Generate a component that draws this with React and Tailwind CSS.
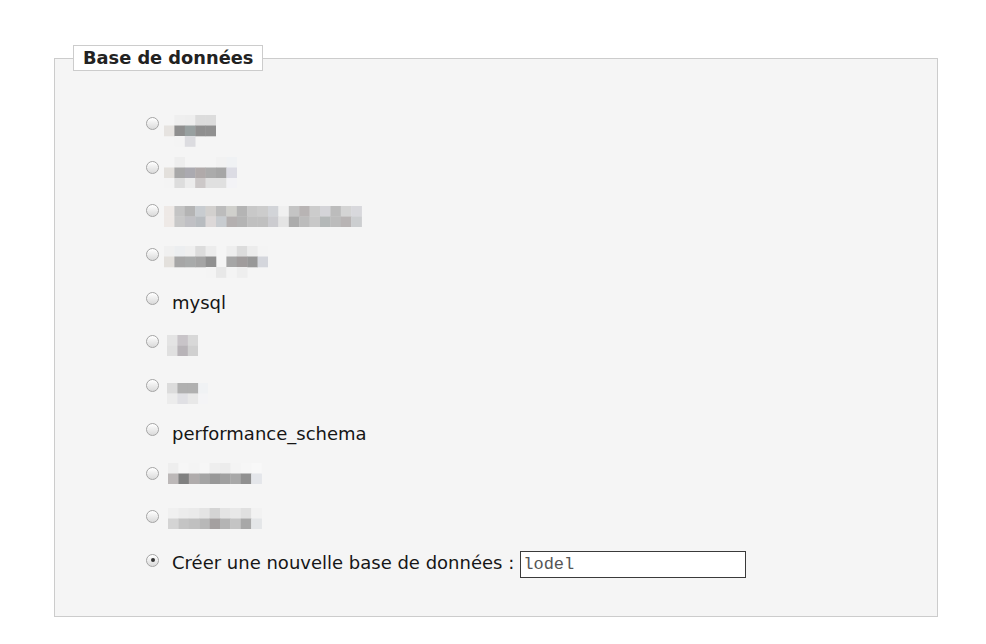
import React from "react";

const CELL_W = 10.4;
const CELL_H = 10.5;

// pixelated (blurred) database names
const blurred = {
  a: [
    ["f5f5f5", "efefef", "eeeeee", "dcdcdc", "dcdcdc"],
    ["e6e3e0", "8f8f8f", "98a0a0", "8f8f8f", "909090"],
    [null, "f4f4f4", "dcdce0", null, null],
  ],
  b: [
    [null, "eeeeee", null, null, null, "f2f2f2", "f0f2f4"],
    ["e3e0dc", "a8a8a8", "abaab0", "b0aaaa", "ababab", "a6a6a6", "dcdce4"],
    ["f4f4f4", "dddddd", "ececec", "ccc8c8", "e0e0e0", "e0e0e0", "f3f3f6"],
  ],
  c: [
    ["eee9e6", "c4c4c4", "b4b4b4", "c8ccd0", "d2d0ce", "bcbcbc", "d0d0cc", "b4b4b4", "c8c8c8", "cccccc", "d2d4d8", "f0f0f0", "c4c4c4", "b8b4b4", "cccccc", "d4d4d8", "bcbcbc", "d4d4d4", "d8d8dc"],
    ["eee9e6", "c8c8c8", "c0c0c4", "b8bcc0", "dcd8d8", "c8ccd0", "b4b0b0", "b4b4b4", "c0c0c0", "c0c0c0", "ccccd0", "e4e4e4", "acacac", "bcbcbc", "c8c8c8", "b4b8b8", "bcbcbc", "b8b4b4", "ccced0"],
  ],
  d: [
    ["f0f0f0", "eceef0", "efefef", "dcdcdc", "ececec", null, "eeeeee", "dcdcdc", "ececec", "f4f4f4"],
    ["e3e0dc", "a6a6a6", "a8aaaa", "a4a4a4", "909090", null, "a6a6a6", "a09c9c", "989898", "d4d6dc"],
    [null, null, null, null, "f4f4f4", "e8e8e8", "f4f4f4", "eeeeee", null, null],
  ],
  e: [
    ["e4e4e4", "c8c4c8", "d8d8d8"],
    ["e0e0e0", "b8b4b8", "d0d0d0"],
  ],
  f: [
    ["dcdcdc", "b0b0b0", "b0b0b0", "f0f2f4"],
    ["ececec", "e0e0e4", "e8e8e8", "f4f4f6"],
  ],
  g: [
    ["eeeeee", "f6f6f6", "f4f4f4", "f6f6f6", "eeeeee", "ececec", "f4f4f4", "f6f6f6", "f8f8f8"],
    ["bcb8b8", "808080", "b0acac", "a4a4a4", "989898", "a0a0a0", "a8a8a8", "909090", "e4e6ea"],
  ],
  h: [
    ["f0f0f0", "ececec", "eaeaea", "e4e4e4", "d4d4d4", "e4e4e4", "e8e8e8", "e0e0e0", "f2f2f2"],
    ["d4d4d4", "c4c4c4", "c0c0c0", "b8b8b8", "a4a0a0", "b4b4b4", "c4c4c4", "a8a8a8", "e4e6e8"],
  ],
};

function Mosaic({ cells }) {
  const cols = Math.max(...cells.map((r) => r.length));
  return (
    <svg width={cols * CELL_W} height={cells.length * CELL_H} className="block shrink-0">
      {cells.map((row, y) =>
        row.map((c, x) =>
          c ? (
            <rect key={`${x}-${y}`} x={x * CELL_W} y={y * CELL_H} width={CELL_W + 0.3} height={CELL_H + 0.3} fill={`#${c}`} />
          ) : null
        )
      )}
    </svg>
  );
}

function Radio({ checked }) {
  return (
    <span className="mt-[16px] flex h-[13px] w-[13px] shrink-0 items-center justify-center rounded-full border border-[#a4a4a4] bg-gradient-to-b from-[#ffffff] to-[#dadada] shadow-[inset_0_1px_1px_rgba(255,255,255,0.9)]">
      {checked && <span className="h-[4px] w-[4px] rounded-full bg-[#333333]" />}
    </span>
  );
}

const rows = [
  { blur: "a", ml: "ml-[5px]", mt: "mt-[14px]" },
  { blur: "b", ml: "ml-[5px]", mt: "mt-[12px]" },
  { blur: "c", ml: "ml-[5px]", mt: "mt-[17.7px]" },
  { blur: "d", ml: "ml-[5px]", mt: "mt-[14px]" },
  { label: "mysql" },
  { blur: "e", ml: "ml-[7.7px]", mt: "mt-[16px]" },
  { blur: "f", ml: "ml-[7.7px]", mt: "mt-[19.7px]" },
  { label: "performance_schema" },
  { blur: "g", ml: "ml-[9.3px]", mt: "mt-[12.7px]" },
  { blur: "h", ml: "ml-[9.3px]", mt: "mt-[13.7px]" },
];

export default function App() {
  return (
    <div className="min-h-[644px] bg-white pt-[45px] font-['DejaVu_Sans','Verdana',sans-serif] text-[#161616]">
      <fieldset className="ml-[54px] w-[884px] border border-[#cccccc] bg-[#f5f5f5] pl-[18px] pb-[34px]">
        <legend className="border border-[#cccccc] bg-white px-[9px] text-[17.8px] leading-[24px] font-bold text-[#222222]">
          Base de données
        </legend>
        <div className="pl-[73px] pt-[30px]">
          {rows.map((r, i) => (
            <div key={i} className="flex h-[43.7px] items-start">
              <Radio />
              {r.label ? (
                <span className="ml-[13px] mt-[15px] text-[18px] leading-[24px]">{r.label}</span>
              ) : (
                <div className={`${r.ml} ${r.mt}`}>
                  <Mosaic cells={blurred[r.blur]} />
                </div>
              )}
            </div>
          ))}
          <div className="flex h-[43.7px] items-start">
            <Radio checked />
            <label className="ml-[13px] mt-[13px] text-[18px] leading-[24px]">
              Créer une nouvelle base de données :
            </label>
            <input
              type="text"
              defaultValue="lodel"
              className="ml-[6px] mt-[13px] h-[27px] w-[226px] border border-[#3a3a3a] bg-white px-[2px] font-['Liberation_Mono','Courier_New',monospace] text-[17px] text-[#555555] outline-none"
            />
          </div>
        </div>
      </fieldset>
    </div>
  );
}
